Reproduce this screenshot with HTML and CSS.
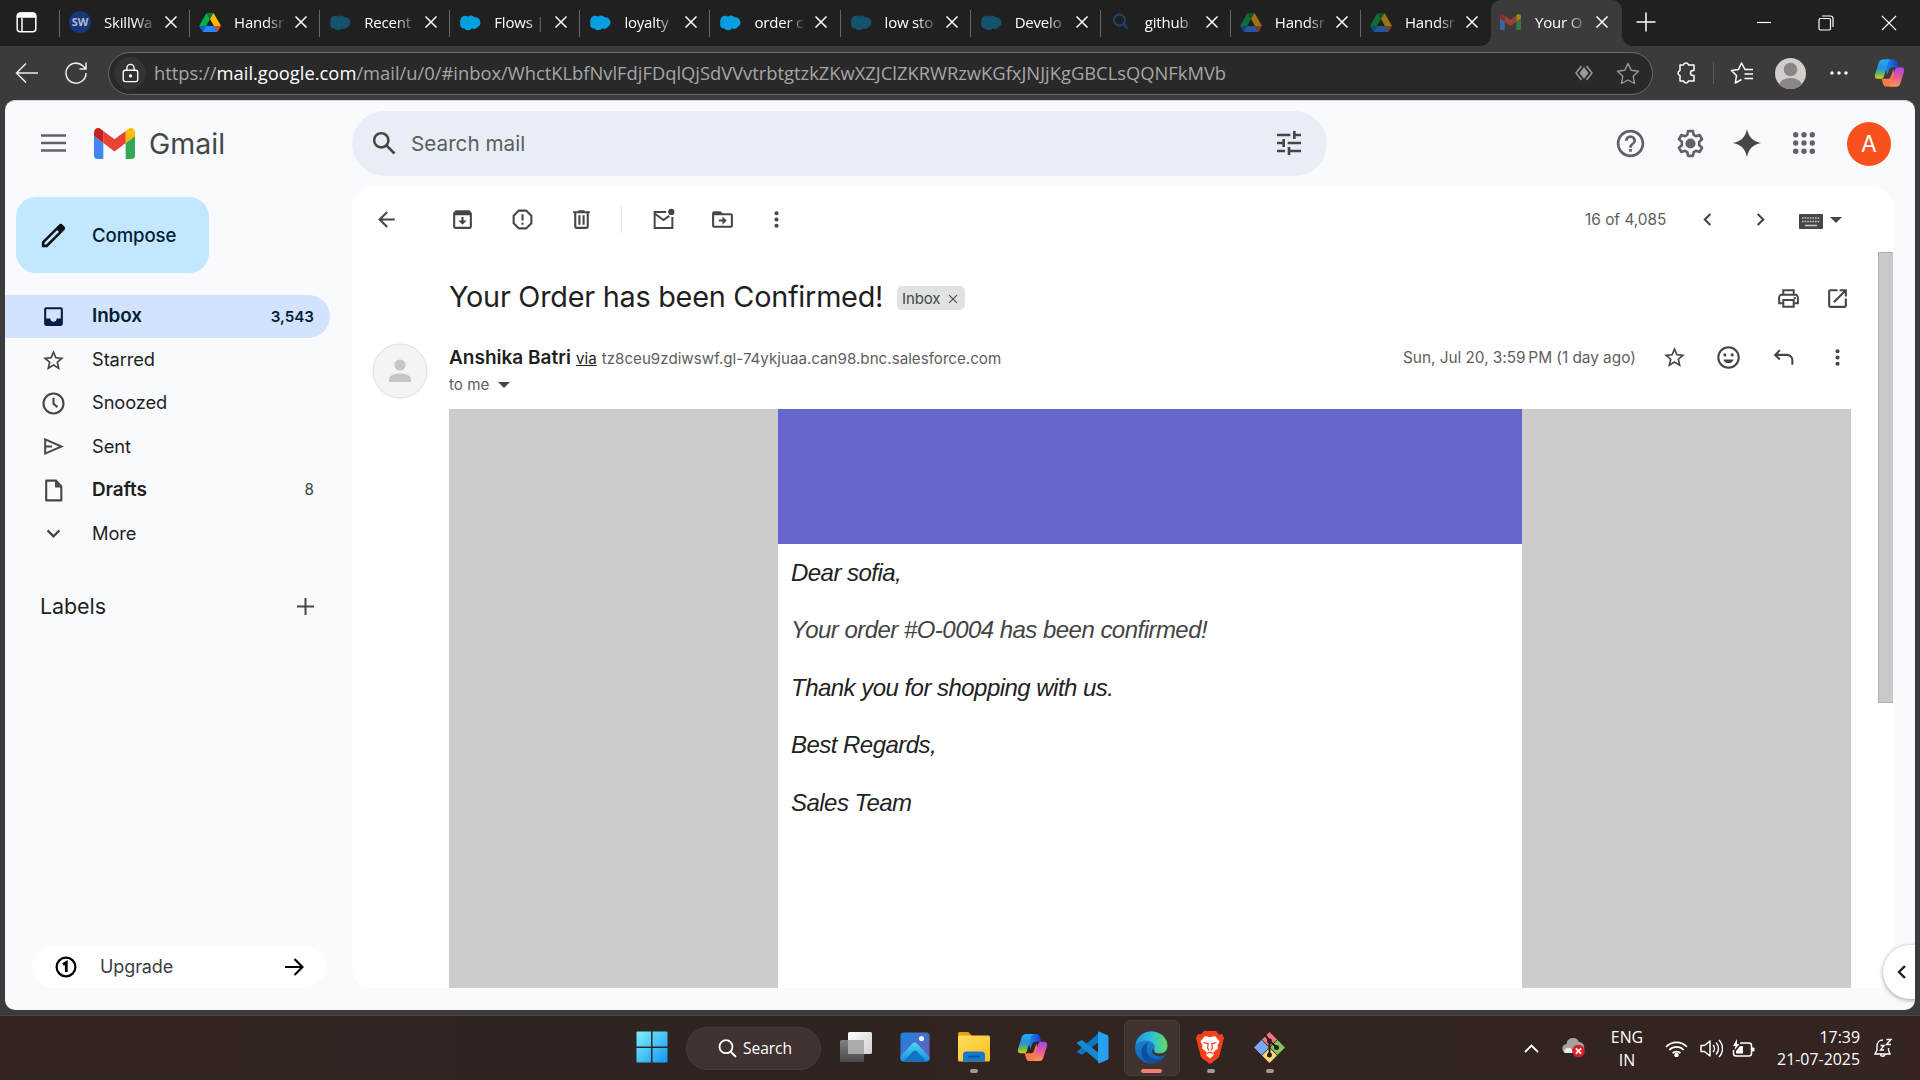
FILE: index.html
```html
<!DOCTYPE html>
<html lang="en">
<head>
<meta charset="utf-8">
<title>Your Order has been Confirmed! - Gmail</title>
<link rel="stylesheet" href="styles.css">
</head>
<body>
<svg class="defs" width="0" height="0">
  <defs>
    <linearGradient id="copA" x1="0" y1="0" x2="0" y2="1"><stop offset="0" stop-color="#1fb0f5"/><stop offset=".45" stop-color="#2a8fe0"/><stop offset=".75" stop-color="#5fb95a"/><stop offset="1" stop-color="#f2c811"/></linearGradient>
    <linearGradient id="copB" x1="0" y1="0" x2="0" y2="1"><stop offset="0" stop-color="#a348f0"/><stop offset=".5" stop-color="#e8559d"/><stop offset="1" stop-color="#ff9a4d"/></linearGradient>
    <linearGradient id="copC" x1="0" y1="0" x2="1" y2="0"><stop offset="0" stop-color="#1c9cf0"/><stop offset="1" stop-color="#1b3fd0"/></linearGradient>
    <linearGradient id="winG" x1="0" y1="0" x2="1" y2="1"><stop offset="0" stop-color="#7ff0fb"/><stop offset="1" stop-color="#0f98f6"/></linearGradient>
    <linearGradient id="edgeA" x1="0" y1="0" x2="1" y2="0"><stop offset="0" stop-color="#2296dd"/><stop offset=".5" stop-color="#2cc0d8"/><stop offset="1" stop-color="#62dc5c"/></linearGradient>
    <linearGradient id="edgeB" x1="0" y1="0" x2="0" y2="1"><stop offset="0" stop-color="#1c8fd8"/><stop offset="1" stop-color="#0d62b4"/></linearGradient>
    <linearGradient id="tvA" x1="0" y1="0" x2="1" y2="1"><stop offset="0" stop-color="#fff"/><stop offset="1" stop-color="#cfcfcf"/></linearGradient>
    <linearGradient id="tvB" x1="0" y1="0" x2="0" y2="1"><stop offset="0" stop-color="#8a8a8a"/><stop offset="1" stop-color="#4c4c4c"/></linearGradient>
    <linearGradient id="phA" x1="0" y1="0" x2="1" y2="1"><stop offset="0" stop-color="#1a86dd"/><stop offset="1" stop-color="#7355b8"/></linearGradient>
    <linearGradient id="phB" x1="0" y1="0" x2="0" y2="1"><stop offset="0" stop-color="#4fd6f5"/><stop offset="1" stop-color="#168fe0"/></linearGradient>
    <linearGradient id="foA" x1="0" y1="0" x2="1" y2="1"><stop offset="0" stop-color="#ffdb63"/><stop offset="1" stop-color="#fbc01f"/></linearGradient>

    <symbol id="close" viewBox="0 0 14 14"><path d="M1.500 1.500l11 11M12.500 1.500l-11 11" stroke="currentColor" stroke-width="1.500" fill="none"/></symbol>
    <symbol id="cloud" viewBox="0 0 22 16"><path d="M9 2.200a4.500 4.500 0 0 1 6.500.6 5.300 5.300 0 0 1 3 10 4.300 4.300 0 0 1-5.500 1 4.600 4.600 0 0 1-7.500.2A4 4 0 0 1 1.400 8.500 4 4 0 0 1 1.600 5 4.600 4.600 0 0 1 9 2.200z" fill="currentColor"/></symbol>
    <symbol id="drive" viewBox="0 0 87 78"><path fill="#0066da" d="m6.600 66.850 3.850 6.650c.8 1.400 1.950 2.500 3.300 3.300l13.750-23.800h-27.500c0 1.550.4 3.100 1.200 4.500z"/><path fill="#00ac47" d="m43.650 25-13.750-23.800c-1.350.8-2.500 1.900-3.300 3.300l-25.400 44a9.060 9.060 0 0 0-1.200 4.500h27.500z"/><path fill="#ea4335" d="m73.550 76.800c1.350-.8 2.500-1.900 3.300-3.300l1.600-2.750 7.650-13.250c.8-1.400 1.200-2.950 1.200-4.500h-27.500l5.850 11.500z"/><path fill="#00832d" d="m43.650 25 13.750-23.800c-1.350-.8-2.900-1.200-4.500-1.200h-18.500c-1.600 0-3.150.45-4.500 1.200z"/><path fill="#2684fc" d="m59.800 53h-32.300l-13.750 23.800c1.350.8 2.900 1.200 4.500 1.200h50.800c1.600 0 3.150-.45 4.500-1.200z"/><path fill="#ffba00" d="m73.400 26.500-12.700-22c-.8-1.400-1.950-2.500-3.300-3.300l-13.750 23.800 16.150 28h27.450c0-1.550-.4-3.100-1.200-4.500z"/></symbol>
    <symbol id="gmail" viewBox="52 42 88 66"><path fill="#4285f4" d="M58 108h14V74L52 59v43c0 3.320 2.690 6 6 6"/><path fill="#34a853" d="M120 108h14c3.320 0 6-2.690 6-6V59l-20 15"/><path fill="#fbbc04" d="M120 48v26l20-15v-8c0-7.420-8.470-11.650-14.400-7.200"/><path fill="#ea4335" d="M72 74V48l24 18 24-18v26L96 92"/><path fill="#c5221f" d="M52 51v8l20 15V48l-5.600-4.200c-5.940-4.450-14.400-.22-14.400 7.200"/></symbol>
    <symbol id="copilot" viewBox="0 0 32 32"><path d="M9 2h11c2 0 3 1 3.600 3l1.400 5h-6c-2 0-3 .8-3.600 3L14 18z" fill="url(#copC)"/><path d="M23 30H13c-2 0-3-1-3.600-3L8 22h6c2 0 3-1 3.600-3L20 12z" fill="#ff7a4a"/><path d="M9.500 2H18c-2 0-3 1-3.600 3l-4 14c-.6 2-1.700 3-3.700 3H4c-2.500 0-3.700-1.800-3-4.200L5 5c.7-2 2.300-3 4.500-3z" fill="url(#copA)"/><path d="M22.500 30H14c2 0 3-1 3.600-3l4-14c.6-2 1.700-3 3.700-3H28c2.500 0 3.700 1.800 3 4.200L27 27c-.7 2-2.300 3-4.500 3z" fill="url(#copB)"/></symbol>
    <symbol id="star" viewBox="0 0 24 24"><path fill="currentColor" d="M22 9.240l-7.190-.62L12 2 9.190 8.630 2 9.240l5.460 4.730L5.820 21 12 17.270 18.180 21l-1.630-7.030L22 9.240zM12 15.400l-3.760 2.270 1-4.280-3.320-2.880 4.380-.38L12 6.100l1.710 4.040 4.380.38-3.320 2.880 1 4.280L12 15.400z"/></symbol>
    <symbol id="more" viewBox="0 0 24 24"><path fill="currentColor" d="M12 8a2 2 0 1 0 0-4 2 2 0 0 0 0 4zm0 2a2 2 0 1 0 0 4 2 2 0 0 0 0-4zm0 6a2 2 0 1 0 0 4 2 2 0 0 0 0-4z"/></symbol>
    <symbol id="left" viewBox="0 0 24 24"><path fill="currentColor" d="M15.410 7.410L14 6l-6 6 6 6 1.410-1.410L10.830 12z"/></symbol>
    <symbol id="right" viewBox="0 0 24 24"><path fill="currentColor" d="M8.590 16.590L13.170 12 8.590 7.410 10 6l6 6-6 6z"/></symbol>
    <symbol id="caret" viewBox="0 0 12 6"><path fill="currentColor" d="M0 0h12L6 6z"/></symbol>
  </defs>
</svg>

<div class="browser">
  <div class="tabstrip">
    <div class="workspace"><svg width="21" height="21" viewBox="0 0 21 21" fill="none" stroke="#fff" stroke-width="1.500"><rect x="1.200" y="1.200" width="18.600" height="18.600" rx="3"/><path d="M1.500 5V4a3 3 0 0 1 3-3h12a3 3 0 0 1 3 3v1z" fill="#fff"/><path d="M6 6v13.500"/></svg></div>
    <div class="tab"><span class="fav sw">SW</span><span class="tab-title">SkillWa</span><svg class="x"><use href="#close"/></svg></div>
    <div class="tab"><svg class="fav drive"><use href="#drive"/></svg><span class="tab-title">Handsr</span><svg class="x"><use href="#close"/></svg></div>
    <div class="tab"><svg class="fav cloud dim"><use href="#cloud"/></svg><span class="tab-title">Recent</span><svg class="x"><use href="#close"/></svg></div>
    <div class="tab"><svg class="fav cloud"><use href="#cloud"/></svg><span class="tab-title">Flows |</span><svg class="x"><use href="#close"/></svg></div>
    <div class="tab"><svg class="fav cloud"><use href="#cloud"/></svg><span class="tab-title">loyalty</span><svg class="x"><use href="#close"/></svg></div>
    <div class="tab"><svg class="fav cloud"><use href="#cloud"/></svg><span class="tab-title">order c</span><svg class="x"><use href="#close"/></svg></div>
    <div class="tab"><svg class="fav cloud dim"><use href="#cloud"/></svg><span class="tab-title">low sto</span><svg class="x"><use href="#close"/></svg></div>
    <div class="tab"><svg class="fav cloud dim"><use href="#cloud"/></svg><span class="tab-title">Develo</span><svg class="x"><use href="#close"/></svg></div>
    <div class="tab"><svg class="fav lens" viewBox="0 0 22 22"><circle cx="9.500" cy="9" r="5.500"/><path d="M13.500 13l4.500 5"/></svg><span class="tab-title">github</span><svg class="x"><use href="#close"/></svg></div>
    <div class="tab"><svg class="fav drive faded"><use href="#drive"/></svg><span class="tab-title">Handsr</span><svg class="x"><use href="#close"/></svg></div>
    <div class="tab"><svg class="fav drive faded"><use href="#drive"/></svg><span class="tab-title">Handsr</span><svg class="x"><use href="#close"/></svg></div>
    <div class="tab active"><svg class="fav faded mailfav"><use href="#gmail"/></svg><span class="tab-title">Your O</span><svg class="x"><use href="#close"/></svg></div>
    <svg class="newtab" width="20" height="20" viewBox="0 0 20 20"><path d="M10 .5v19M.5 10h19" stroke="#fff" stroke-width="1.500"/></svg>
    <div class="winctl">
      <svg width="14" height="14" viewBox="0 0 14 14"><path d="M0 6.500h14" stroke="#fff" stroke-width="1.200"/></svg>
      <svg width="16" height="16" viewBox="0 0 16 16" fill="none" stroke="#fff" stroke-width="1.200"><rect x="1" y="3.500" width="11.500" height="11.500" rx="1.500"/><path d="M4 1h8.500a2.500 2.500 0 0 1 2.500 2.500V12"/></svg>
      <svg width="16" height="16" viewBox="0 0 16 16"><path d="M1 1l14 14M15 1L1 15" stroke="#fff" stroke-width="1.200"/></svg>
    </div>
  </div>

  <div class="navbar">
    <svg class="nav-back" width="24" height="22" viewBox="0 0 24 22" fill="none" stroke="#eee" stroke-width="1.500"><path d="M11 1.500L1.500 11l9.500 9.500M1.500 11h21.500"/></svg>
    <svg class="nav-reload" width="24" height="24" viewBox="0 0 24 24" fill="none" stroke="#eee" stroke-width="1.500"><path d="M22 12A10 10 0 1 1 19 5l3 3M22 1.500V8h-6.500"/></svg>
    <div class="address">
      <span class="lock"><svg width="19" height="20" viewBox="0 0 20 22" fill="none" stroke="#fff" stroke-width="1.500"><rect x="2" y="8" width="16" height="12.500" rx="2.500"/><path d="M6 8V5.500a4 4 0 0 1 8 0V8"/><circle cx="10" cy="14.200" r="1" fill="#fff"/></svg></span>
      <span class="url">https://<b>mail.google.com</b>/mail/u/0/#inbox/WhctKLbfNvlFdjFDqlQjSdVVvtrbtgtzkZKwXZJClZKRWRzwKGfxJNJjKgGBCLsQQNFkMVb</span>
      <svg class="addr-ai" width="18" height="16" viewBox="0 0 18 16"><path d="M6.500 1L1 8l5.500 7M11.500 1L17 8l-5.500 7" fill="none" stroke="#9a9a9a" stroke-width="1.500"/><path d="M9 2l4.500 6L9 14 4.500 8z" fill="#9a9a9a"/></svg>
      <svg class="addr-star" width="24" height="23" viewBox="0 0 24 23"><path d="M12 1.500l3.200 6.700 7.300 1-5.300 5.100 1.300 7.200-6.500-3.500-6.500 3.500 1.300-7.200L1.500 9.200l7.300-1z" fill="none" stroke="#9a9a9a" stroke-width="1.400" stroke-linejoin="round"/></svg>
    </div>
    <div class="nav-right">
      <svg class="n1" width="22" height="24" viewBox="0 0 22 24"><path d="M5 4h3.500a2.600 2.600 0 0 1 5 0H19v5.500h-1a2.500 2.500 0 0 0 0 5h1V20h-5.500a2.600 2.600 0 0 1-5 0H5v-5.500a2.600 2.600 0 0 1 0-5z" fill="none" stroke="#fff" stroke-width="1.500" stroke-linejoin="round"/></svg>
      <span class="nav-sep"></span>
      <svg class="n2" width="24" height="24" viewBox="0 0 24 24"><path d="M15 8.500L11.500 2 8.500 8.500l-7 1 5 5L5.300 22l6.200-3.500M14.500 8.500H23M14.500 13H23M14.500 17.500H23" fill="none" stroke="#fff" stroke-width="1.500" stroke-linejoin="round"/></svg>
      <svg class="n3" width="31" height="31" viewBox="0 0 31 31"><clipPath id="pc"><circle cx="15.500" cy="15.500" r="15.500"/></clipPath><g clip-path="url(#pc)"><path fill="#d0cecb" d="M0 0h31v31H0z"/><circle cx="15.500" cy="11.500" r="6.800" fill="#8b8683"/><ellipse cx="15.500" cy="28" rx="11.500" ry="8" fill="#8b8683"/></g></svg>
      <svg class="n4" width="18" height="4" viewBox="0 0 18 4" fill="#fff"><circle cx="2" cy="2" r="1.700"/><circle cx="9" cy="2" r="1.700"/><circle cx="16" cy="2" r="1.700"/></svg>
      <svg class="n5" width="31" height="32"><use href="#copilot"/></svg>
    </div>
  </div>

  <div class="page">
    <header class="top">
      <svg class="burger" width="25" height="18" viewBox="0 0 25 18"><path d="M0 1.500h25M0 9h25M0 16.500h25" stroke="#5f6368" stroke-width="2.400"/></svg>
      <svg class="logo" width="41" height="31"><use href="#gmail"/></svg>
      <span class="brand">Gmail</span>
      <div class="search">
        <svg class="search-ic" width="31" height="31" viewBox="0 0 24 24"><path fill="#444746" d="M20.490 19l-5.730-5.730C15.530 12.200 16 10.910 16 9.500A6.500 6.500 0 1 0 9.500 16c1.410 0 2.700-.47 3.770-1.240L19 20.490 20.490 19zM5 9.500C5 7.010 7.010 5 9.500 5S14 7.010 14 9.500 11.990 14 9.500 14 5 11.990 5 9.500z"/></svg>
        <span class="search-text">Search mail</span>
        <svg class="tune" width="32" height="32" viewBox="0 0 24 24"><path fill="#444746" d="M3 17v2h6v-2H3zM3 5v2h10V5H3zm10 16v-2h8v-2h-8v-2h-2v6h2zM7 9v2H3v2h4v2h2V9H7zm14 4v-2H11v2h10zm-6-4h2V7h4V5h-4V3h-2v6z"/></svg>
      </div>
      <div class="apps">
        <svg width="33" height="33" viewBox="0 0 24 24"><path fill="#5f6368" d="M11 18h2v-2h-2v2zm1-16C6.480 2 2 6.480 2 12s4.480 10 10 10 10-4.480 10-10S17.520 2 12 2zm0 18c-4.410 0-8-3.590-8-8s3.590-8 8-8 8 3.590 8 8-3.590 8-8 8zm0-14a4 4 0 0 0-4 4h2c0-1.100.9-2 2-2s2 .9 2 2c0 2-3 1.750-3 5h2c0-2.250 3-2.500 3-5a4 4 0 0 0-4-4z"/></svg>
        <svg class="a2" width="33" height="33" viewBox="0 0 24 24"><path fill="none" stroke="#5f6368" stroke-width="1.900" stroke-linejoin="round" d="M10.200 3h3.600l.5 2.700 1.700 1 2.600-.9 1.800 3.100-2.100 1.800v2.600l2.100 1.800-1.800 3.100-2.600-.9-1.700 1-.5 2.700h-3.600l-.5-2.700-1.700-1-2.600.9-1.800-3.100 2.100-1.800v-2.600L3.600 8.900l1.800-3.100 2.600.9 1.700-1z"/><circle cx="12" cy="12" r="3.700" fill="#5f6368"/></svg>
        <svg class="a3" width="28" height="28" viewBox="0 0 28 28"><path fill="#444746" d="M14 0c1.500 8 6 12.500 14 14-8 1.500-12.500 6-14 14-1.500-8-6-12.500-14-14C8 12.500 12.500 8 14 0z"/></svg>
        <svg class="a4" width="22" height="22" viewBox="0 0 22 22" fill="#5f6368"><circle cx="2.700" cy="2.700" r="2.700"/><circle cx="11" cy="2.700" r="2.700"/><circle cx="19.300" cy="2.700" r="2.700"/><circle cx="2.700" cy="11" r="2.700"/><circle cx="11" cy="11" r="2.700"/><circle cx="19.300" cy="11" r="2.700"/><circle cx="2.700" cy="19.300" r="2.700"/><circle cx="11" cy="19.300" r="2.700"/><circle cx="19.300" cy="19.300" r="2.700"/></svg>
        <span class="avatar">A</span>
      </div>
    </header>

    <div class="body">
      <nav class="side">
        <div class="compose"><svg width="31" height="31" viewBox="0 0 24 24"><path fill="#0b0f14" d="M20.410 4.940l-1.350-1.350a2 2 0 0 0-2.830 0L3 16.820V21h4.180L20.410 7.770a2 2 0 0 0 0-2.830zm-14 14.120L5 19v-1.360l9.820-9.820 1.410 1.410-9.820 9.830z"/></svg><span>Compose</span></div>
        <div class="item on"><svg viewBox="0 0 24 24"><path fill="#041e49" d="M19 3H5a2 2 0 0 0-2 2v14a2 2 0 0 0 2 2h14a2 2 0 0 0 2-2V5a2 2 0 0 0-2-2zm0 11h-4a3 3 0 0 1-6 0H5V5h14v9z"/></svg><span>Inbox</span><em>3,543</em></div>
        <div class="item"><svg><use href="#star"/></svg><span>Starred</span></div>
        <div class="item"><svg viewBox="0 0 24 24" fill="none" stroke="currentColor" stroke-width="2"><circle cx="12" cy="12" r="9.600"/><path d="M12 6.500v5.800l3.800 3.200"/></svg><span>Snoozed</span></div>
        <div class="item"><svg viewBox="0 0 24 24"><path fill="none" stroke="currentColor" stroke-width="1.900" d="M4 5.200L19.700 12 4 18.800zM4 12h6.500"/></svg><span>Sent</span></div>
        <div class="item bold"><svg viewBox="0 0 24 24"><path fill="none" stroke="currentColor" stroke-width="2" stroke-linejoin="round" d="M5 2.500h9.500L19.500 8v13.500H5z"/><path fill="currentColor" d="M13.500 2.500v6.500h6z"/></svg><span>Drafts</span><em>8</em></div>
        <div class="item"><svg viewBox="0 0 24 24"><path fill="none" stroke="currentColor" stroke-width="2.200" d="M6.300 9l5.700 5.700L17.700 9"/></svg><span>More</span></div>
        <div class="labels"><span>Labels</span><svg width="17" height="17" viewBox="0 0 17 17"><path d="M8.500 0v17M0 8.500h17" stroke="#444746" stroke-width="2"/></svg></div>
        <div class="upgrade">
          <svg width="22" height="22" viewBox="0 0 22 22"><circle cx="11" cy="11" r="9.400" fill="none" stroke="#000" stroke-width="2.200"/><path d="M8 8.500l3.300-2V16" fill="none" stroke="#000" stroke-width="2.800"/></svg>
          <span>Upgrade</span>
          <svg class="arr" width="19" height="18" viewBox="0 0 19 18"><path d="M0 9h17M9.500 1l8 8-8 8" fill="none" stroke="#000" stroke-width="2.200"/></svg>
        </div>
      </nav>

      <main class="mail">
        <div class="tools">
          <svg class="t1" viewBox="0 0 24 24"><path fill="currentColor" d="M20 11H7.830l5.590-5.590L12 4l-8 8 8 8 1.410-1.410L7.830 13H20z"/></svg>
          <svg class="t2" viewBox="0 0 24 24"><path fill="currentColor" d="M20.540 5.230l-1.390-1.680A1.450 1.450 0 0 0 18 3H6c-.47 0-.88.21-1.160.55L3.460 5.230A2 2 0 0 0 3 6.500V19a2 2 0 0 0 2 2h14a2 2 0 0 0 2-2V6.500c0-.48-.17-.93-.46-1.270zM5 19V8h14v11zM11 9.500V13H8l4 4 4-4h-3V9.500z"/></svg>
          <svg class="t3" viewBox="0 0 24 24"><path fill="none" stroke="currentColor" stroke-width="2" d="M8.300 3.500h7.400l4.800 4.800v7.400l-4.800 4.800H8.300l-4.800-4.800V8.300z" stroke-linejoin="round"/><path fill="currentColor" d="M11 7h2v6h-2zM11 15h2v2h-2z"/></svg>
          <svg class="t4" viewBox="0 0 24 24"><path fill="currentColor" d="M15 4V3H9v1H4v2h1v13a2 2 0 0 0 2 2h10a2 2 0 0 0 2-2V6h1V4h-5zm2 15H7V6h10v13zM9 8h2v9H9zm4 0h2v9h-2z"/></svg>
          <span class="tsep"></span>
          <svg class="t5" viewBox="0 0 24 24"><path fill="none" stroke="currentColor" stroke-width="1.900" d="M14.500 4.800H3.500v15.400h17V9.500M3.800 6.500l8.200 6 5.500-4"/><circle cx="19.500" cy="4.700" r="3" fill="currentColor"/></svg>
          <svg class="t6" viewBox="0 0 24 24"><path fill="currentColor" d="M20 6h-8l-2-2H4a2 2 0 0 0-2 2v12a2 2 0 0 0 2 2h16a2 2 0 0 0 2-2V8a2 2 0 0 0-2-2zm0 12H4V8h16v10zm-8-1l4-4-4-4v3H8.500v2H12z"/></svg>
          <svg class="t7"><use href="#more"/></svg>
          <span class="count">16 of 4,085</span>
          <svg class="t8"><use href="#left"/></svg>
          <svg class="t9"><use href="#right"/></svg>
          <svg class="kbd" viewBox="0 0 24 15"><rect width="24" height="15" rx="1" fill="#444746"/><path d="M3 4h18M3 7.500h18" stroke="#c8c8c8" stroke-width="1.500" stroke-dasharray="1.600 1"/><path d="M6 11.500h12" stroke="#c8c8c8" stroke-width="1.400"/></svg>
          <svg class="tcaret"><use href="#caret"/></svg>
        </div>

        <div class="scroll">
          <div class="subject">
            <h1>Your Order has been Confirmed!</h1>
            <span class="chip">Inbox <svg width="10" height="10"><use href="#close"/></svg></span>
            <svg class="print" viewBox="0 0 24 24" fill="none" stroke="#444746" stroke-width="1.900"><path d="M7 8.500V4h10v4.500M6.500 16.500H3V11a2.500 2.500 0 0 1 2.500-2.500h13A2.500 2.500 0 0 1 21 11v5.500h-3.500"/><path d="M7 13.500h10V20H7z"/><path d="M17 11.500h2"/></svg>
            <svg class="open" viewBox="0 0 24 24"><path fill="#444746" d="M19 19H5V5h7V3H5a2 2 0 0 0-2 2v14a2 2 0 0 0 2 2h14a2 2 0 0 0 2-2v-7h-2v7zM14 3v2h3.590l-9.830 9.830 1.410 1.410L19 6.410V10h2V3h-7z"/></svg>
          </div>
          <div class="sender">
            <span class="face"><svg width="56" height="56" viewBox="0 0 56 56"><circle cx="28" cy="28" r="27" fill="#f4f4f4" stroke="#e0e0e0"/><circle cx="28" cy="22" r="5.500" fill="#c6c6c6"/><path d="M17 39v-3c0-4 7-5.500 11-5.500S39 32 39 36v3z" fill="#c6c6c6"/></svg></span>
            <div class="who">
              <div class="line1"><b>Anshika Batri</b><u>via</u><span class="domain">tz8ceu9zdiwswf.gl-74ykjuaa.can98.bnc.salesforce.com</span></div>
              <div class="line2"><span>to me</span><svg><use href="#caret"/></svg></div>
            </div>
            <div class="meta">
              <span class="date">Sun, Jul 20, 3:59&#8239;PM (1 day ago)</span>
              <svg class="m1"><use href="#star"/></svg>
              <svg class="m2" viewBox="0 0 24 24"><circle cx="12" cy="12" r="9.800" fill="none" stroke="currentColor" stroke-width="2"/><circle cx="8.500" cy="9.500" r="1.500" fill="currentColor"/><circle cx="15.500" cy="9.500" r="1.500" fill="currentColor"/><path d="M7 14h10a5.300 5.300 0 0 1-10 0z" fill="currentColor"/></svg>
              <svg class="m3" viewBox="0 0 24 24"><path fill="none" stroke="currentColor" stroke-width="2" d="M8.500 5L4 9.500 8.500 14M4 9.500h11.500a5 5 0 0 1 5 5V19"/></svg>
              <svg class="m4"><use href="#more"/></svg>
            </div>
          </div>
          <div class="message">
            <div class="sheet">
              <div class="banner"></div>
              <div class="letter">
                <p>Dear sofia,</p>
                <p class="soft">Your order #O-0004 has been confirmed!</p>
                <p>Thank you for shopping with us.</p>
                <p>Best Regards,</p>
                <p>Sales Team</p>
              </div>
            </div>
          </div>
        </div>
        <div class="bar"></div>
      </main>
    </div>
    <div class="panel-toggle"><svg width="11" height="14" viewBox="0 0 11 14"><path d="M9 1L3 7l6 6" fill="none" stroke="#1f1f1f" stroke-width="2.400"/></svg></div>
  </div>
</div>

<footer class="taskbar">
  <div class="cell"><svg width="32" height="32" viewBox="0 0 32 32"><path fill="url(#winG)" d="M1.500.5H15v15H.5v-14a1 1 0 0 1 1-1zM16.500.5h14a1 1 0 0 1 1 1v14h-15zM.5 17H15v14.500H1.500a1 1 0 0 1-1-1zM16.500 17h15v13.500a1 1 0 0 1-1 1h-14z"/></svg></div>
  <div class="tsearch"><svg width="19" height="19" viewBox="0 0 19 19"><circle cx="8" cy="7.700" r="6.500" fill="none" stroke="#fff" stroke-width="1.800"/><path d="M12.500 12.500L18 18" stroke="#fff" stroke-width="2"/></svg><span>Search</span></div>
  <div class="cell"><svg width="32" height="30" viewBox="0 0 32 30"><rect x="8" width="24" height="22" rx="1.500" fill="url(#tvA)"/><rect y="8" width="24" height="22" rx="1.500" fill="url(#tvB)" opacity=".92"/><rect x="8" y="8" width="16" height="14" fill="#aaa"/></svg></div>
  <div class="cell"><svg width="30" height="30" viewBox="0 0 30 30"><rect x=".5" y=".5" width="29" height="29" rx="3.500" fill="url(#phA)"/><path d="M.5 24l12-12.500a3 3 0 0 1 4.500 0L29.500 25v1a3.500 3.500 0 0 1-3.500 3.500H4A3.500 3.500 0 0 1 .5 26z" fill="url(#phB)"/><path d="M4 29l9-9.500a2.500 2.500 0 0 1 4 0L26 29z" fill="#1173c6"/><circle cx="21.500" cy="6.500" r="2.600" fill="#e9f2ff"/></svg></div>
  <div class="cell run"><svg width="32" height="30" viewBox="0 0 32 30"><path d="M0 1.500A1.500 1.500 0 0 1 1.500 0h9L14 4v4H0z" fill="#dfa10c"/><rect y="3.500" width="32" height="26" rx="1.500" fill="url(#foA)"/><path d="M5 29.500V23a3.500 3.500 0 0 1 3.500-3.500h15A3.500 3.500 0 0 1 27 23v6.500z" fill="#1679cc"/><path d="M10 24.500h12" stroke="#0a4f91" stroke-width="1.800"/></svg></div>
  <div class="cell"><svg width="31" height="31"><use href="#copilot"/></svg></div>
  <div class="cell"><svg width="33" height="33" viewBox="0 0 33 33"><path d="M24 1v9L6 24l-4.500-2.500L1 20.500z" fill="#0d75bd"/><path d="M1 12.500l.5-1.500L6 9l18 14v9z" fill="#1789d1"/><path d="M23.500.7L31 4c1 .5 1.500 1.200 1.500 2.300v20.400c0 1.100-.5 1.800-1.500 2.300l-7.500 3.300c-1 .4-1.500 0-1.500-1V2c0-1 .500-1.700 1.500-1.300z" fill="#27a0ef"/></svg></div>
  <div class="cell here"><svg width="33" height="33" viewBox="0 0 33 33"><circle cx="16" cy="16.500" r="16" fill="url(#edgeB)"/><path d="M.8 14C2 5.500 8.500.500 16.500.5c9.500 0 16 6.800 16 14 0 5-3.500 8-8 8-4.500 0-6-1.800-5.200-3.500 1.800-4-1-9.500-8.300-9.500-5 0-8.600 2-10.200 4.500z" fill="url(#edgeA)"/><path d="M11.500 18c0 7 6.500 11.500 12 10 2.500-.6 4.500-1.600 6-2.500-2.500 4.500-8 7.500-13 7-6-.8-10-6-10-11.500 0-5 3-8.500 7-9.500-1.500 2-2 4-2 6.500z" fill="#114f98"/><path d="M19.300 19c-.8 1.700.7 3.500 5.200 3.500 2.800 0 5.300-1 6.800-3 .8 1 .2 3-1.600 4.600-2.400 1.600-6 1.900-9.200.4-2.800-1.300-4-3.500-3.300-6 1-.3 1.800 0 2.100.5z" fill="#40322f"/></svg></div>
  <div class="cell run"><svg width="28" height="33" viewBox="0 0 28 33"><path d="M8 0h12l3 3.500 3-.5 2 4-1 3.500-3.500 14c-.5 1.500-1 2.300-2.200 3.200L14 33l-7.300-5.300c-1.200-.9-1.700-1.700-2.200-3.200L1 10.500 0 7l2-4 3 .5z" fill="#f7401a"/><path d="M9 5l5 1.200L19 5l4.500 5.500-2 4 .5 3-4.500 3.500v3.500L14 27.500 10.500 24.500V21L6 17.500l.5-3-2-4z" fill="#fff"/><path d="M7.500 11.500l4.800 1.300-.8 4 1.500 2.700M20.500 11.500l-4.800 1.300.8 4-1.500 2.700M11 22.500l3-1.300 3 1.300" fill="none" stroke="#f7401a" stroke-width="1.200"/></svg></div>
  <div class="cell run"><svg width="33" height="33" viewBox="0 0 33 33"><path fill="#f2787c" d="M16.500 1L24 8.500l-7.500 7.500L9 8.500z"/><path fill="#7aa8f8" d="M8.500 9l7.500 7.500L8.500 24 1 16.500z"/><path fill="#86c65a" d="M24.500 9l7.500 7.500-7.500 7.500-7.500-7.500z"/><path fill="#f5d97a" d="M16.500 17l7.500 7.500-7.500 7.500L9 24.500z"/><path d="M12 4l4.500 5.500v14M16.500 10l7 6" stroke="#2a1d1b" stroke-width="2" fill="none"/><circle cx="16.500" cy="10" r="2.500" fill="#2a1d1b"/><circle cx="23.500" cy="16.500" r="2.500" fill="#2a1d1b"/><circle cx="16.500" cy="24" r="2.500" fill="#2a1d1b"/></svg></div>

  <div class="tray">
    <span class="c1"><svg width="15" height="9" viewBox="0 0 15 9"><path d="M1 8l6.500-6.500L14 8" fill="none" stroke="#fff" stroke-width="1.800"/></svg></span>
    <span class="c2"><svg width="24" height="22" viewBox="0 0 24 22"><path d="M5 16a4.500 4.500 0 0 1-.5-9A6.500 6.500 0 0 1 17 5a5.500 5.500 0 0 1 2 10.500z" fill="#a5a1a0"/><path d="M2 15c0-3 3-5 6-4l6 5H5c-2 0-3-.3-3-1z" fill="#ece9e8"/><circle cx="16.500" cy="14" r="6.300" fill="#d8202c"/><path d="M13.800 11.300l5.400 5.400M19.200 11.300l-5.400 5.400" stroke="#fff" stroke-width="1.700"/></svg></span>
    <span class="c3">ENG<br>IN</span>
    <span class="c4"><svg width="23" height="17" viewBox="0 0 23 17" fill="none" stroke="#fff" stroke-width="1.700"><path d="M1 6.800a14.500 14.500 0 0 1 21 0M4.300 10a10 10 0 0 1 14.400 0M7.500 13.200a5.700 5.700 0 0 1 8 0"/><circle cx="11.500" cy="15" r="1.400" fill="#fff"/></svg></span>
    <span class="c5"><svg width="23" height="19" viewBox="0 0 23 19" fill="none" stroke="#fff" stroke-width="1.500"><path d="M1 6.500h3.500L10 2v15l-5.500-4.500H1z" stroke-linejoin="round"/><path d="M13 6a5 5 0 0 1 0 7M16 3.500a8.500 8.500 0 0 1 0 12M19 1a12 12 0 0 1 0 17"/></svg></span>
    <span class="c6"><svg width="23" height="19" viewBox="0 0 23 19"><path d="M8 4h9a2.500 2.500 0 0 1 2.500 2.500v8A2.500 2.500 0 0 1 17 17H4a2.500 2.500 0 0 1-2.500-2.500V11" fill="none" stroke="#fff" stroke-width="1.500"/><path d="M20 8.500h1.500a1 1 0 0 1 1 1v2a1 1 0 0 1-1 1H20z" fill="#fff"/><path d="M8 7h3v7.500H4V12z" fill="#fff"/><path d="M5 0L1 7h2.500L2.500 11 7.500 5H5z" fill="#fff"/></svg></span>
    <span class="c7">17:39<br>21-07-2025</span>
    <span class="c8"><svg width="20" height="20" viewBox="0 0 20 20" fill="none" stroke="#fff" stroke-width="1.400"><path d="M10 2C6 2 4 5 4 8v4l-2 4h15l-1.500-4V10M7.500 16.500a2.300 2.300 0 0 0 4.500 0"/><path d="M7.500 7.500H11L7.500 12H11M13.500 1.500h4.500L13.500 6.500H18"/></svg></span>
  </div>
</footer>
</body>
</html>
```
FILE: styles.css
```css
* { box-sizing: border-box; }
html, body { margin: 0; width: 1920px; height: 1080px; overflow: hidden; }
body { background: #312421; font-family: Inter, "Liberation Sans", sans-serif; color: #1f1f1f; display: flex; flex-direction: column; }
.defs { position: absolute; }
svg { flex: none; display: block; }
span { white-space: nowrap; }

.browser { height: 1016px; background: #3b3b3b; border-bottom: 1px solid #4c4846; flex: none; }

/* tab strip */
.tabstrip { height: 46px; background: #202020; display: flex; align-items: center; padding-bottom: 2px; }
.workspace { width: 60px; padding-left: 16px; }
.tab { width: 130.100px; height: 46px; flex: none; display: flex; align-items: center; position: relative; padding-left: 9px; margin-bottom: -2px; padding-bottom: 2px; }
.tab::before { content: ""; position: absolute; left: -1px; top: 10px; width: 1px; height: 27px; background: #666; }
.fav { width: 22px; height: 17px; margin-right: 13px; flex: none; }
.fav.drive { height: 19px; }
.fav.lens { height: 22px; fill: none; stroke: #1c4670; stroke-width: 2; }
.cloud { color: #049fe0; }
.cloud.dim { color: #14526e; }
.faded { opacity: .55; }
.sw { height: 22px; border-radius: 50%; background: #17377c; color: #b4bccb; font: bold 11px/22px "Noto Sans", sans-serif; text-align: center; }
.tab-title { width: 53px; color: #fff; font: 15px/24px "Open Sans", "Noto Sans", sans-serif; letter-spacing: -.2px; -webkit-mask-image: linear-gradient(90deg, #000 60%, rgba(0, 0, 0, .1) 96%); mask-image: linear-gradient(90deg, #000 60%, rgba(0, 0, 0, .1) 96%); }
.x { width: 14px; height: 14px; margin-left: 7px; color: #fff; }
.tab.active { width: 131px; background: #3b3b3b; border-radius: 10px 10px 0 0; }
.tab.active::before { left: -10px; top: 36px; width: 10px; height: 10px; background: radial-gradient(circle at 0 0, #202020 9.500px, #3b3b3b 10px); }
.tab.active::after { content: ""; position: absolute; right: -10px; top: 36px; width: 10px; height: 10px; background: radial-gradient(circle at 100% 0, #202020 9.500px, #3b3b3b 10px); }
.mailfav { height: 16px; width: 21px; margin-right: 14px; }
.newtab { margin-left: 14px; }
.winctl { margin-left: auto; display: flex; align-items: center; gap: 47px; padding-right: 23px; padding-top: 2px; }

/* address row */
.navbar { height: 54px; display: flex; align-items: center; padding: 0 14px 0 15px; }
.nav-back { margin-right: 25px; }
.nav-reload { margin-right: 20px; }
.address { width: 1545px; height: 43px; border: 1.500px solid #6b6b6b; border-radius: 22px; background: #292929; display: flex; align-items: center; padding: 0 12px 0 5px; }
.lock { width: 32px; height: 32px; border-radius: 50%; background: #333; display: grid; place-items: center; margin-right: 8px; }
.url { font: 18.350px/28px "Open Sans", "Noto Sans", sans-serif; color: #a6a6a6; flex: 1; padding-bottom: 1px; }
.url b { font-weight: 400; color: #fff; }
.addr-ai { margin-right: 23px; }
.nav-right { display: flex; align-items: center; }
.n1 { margin-left: 22px; }
.nav-sep { width: 1px; height: 22px; background: #5a5a5a; margin: 0 17px 0 16px; }
.n2 { margin-left: -1px; }
.n3 { margin: 0 24px 0 21px; }
.n5 { margin-left: 26px; }

/* gmail page */
.page { margin: 0 5px; width: 1910px; height: 910px; background: #f8fafe; border-radius: 10px; border-top: 1px solid #d8d9dd; position: relative; overflow: hidden; }
.top { height: 86px; display: flex; align-items: center; padding: 0 24px 2px 36px; }
.burger { margin-right: 27px; }
.logo { margin-left: 1px; }
.brand { font-size: 28.500px; color: #444746; margin-left: 14px; }
.search { width: 975px; height: 65px; border-radius: 33px; background: #e9eef6; display: flex; align-items: center; padding: 0 22px 0 17px; margin-left: auto; }
.search-text { font-size: 20.700px; color: #5b5e62; margin-left: 11px; flex: 1; }
.apps { display: flex; align-items: center; width: 278px; margin-left: 286px; }
.apps svg:first-child { margin-left: 1px; }
.a2 { margin-left: 27px; }
.a3 { margin-left: 26px; }
.a4 { margin-left: 32px; }
.avatar { width: 44px; height: 44px; border-radius: 50%; background: #f8511d; color: #fff; font-size: 23px; line-height: 44px; text-align: center; margin-left: 32px; margin-top: 1px; }
.body { display: flex; }

.side { width: 347px; padding-top: 10px; color: #1f1f1f; font-size: 18.300px; letter-spacing: -.1px; }
.compose { width: 193px; height: 76px; border-radius: 20px; background: #c2e7ff; margin: 0 0 22px 11px; display: flex; align-items: center; padding-left: 22px; gap: 23px; font-weight: 500; color: #001d35; font-size: 18.600px; }
.item { width: 325px; height: 43.400px; padding: 0 16px 0 36px; display: flex; align-items: center; border-radius: 0 22px 22px 0; color: #444746; }
.item svg { width: 25px; height: 25px; margin-right: 26px; }
.item span { flex: 1; color: #1f1f1f; padding-bottom: 2px; }
.item em { font-style: normal; font-size: 15.200px; letter-spacing: 0; padding-bottom: 1px; }
.item.on { background: #d3e3fd; }
.item.on span, .item.on em { color: #001d35; font-weight: 600; }
.item.on span, .item.bold span { font-size: 18.900px; }
.item.bold span { font-weight: 600; }
.labels { width: 325px; padding: 0 16px 0 35px; height: 60px; margin-top: 21px; display: flex; align-items: center; justify-content: space-between; font-size: 21.500px; }
.upgrade { width: 293px; height: 43px; border-radius: 22px; background: #fff; margin: 309px 0 0 27px; padding: 0 21px 0 23px; display: flex; align-items: center; color: #3c4043; }
.upgrade span { flex: 1; margin-left: 23px; font-size: 18px; }

.mail { width: 1541px; height: 801px; background: #fff; border-radius: 20px; overflow: hidden; position: relative; color: #444746; }
.tools { height: 65px; display: flex; align-items: center; padding-left: 22px; }
.tools svg { width: 25px; height: 25px; }
.tools .t2 { margin-left: 51px; }
.tools .t3 { margin-left: 35px; }
.tools .t4 { margin-left: 34px; }
.tsep { width: 1px; height: 27px; background: #e3e5e8; margin: 0 29px 0 27px; }
.tools .t6 { margin-left: 34px; }
.tools .t7 { margin-left: 29px; }
.count { margin-left: auto; width: 83px; font-size: 15.400px; color: #5e5e5e; }
.tools .t8 { margin-left: 27px; }
.tools .t9 { margin-left: 28px; }
.tools .kbd { width: 24px; height: 15px; margin: 3px 0 0 26px; }
.tools .tcaret { width: 12px; height: 6px; margin: 0 51px 0 7px; }

.subject { height: 90px; display: flex; align-items: center; padding-left: 97px; }
.subject h1 { margin: 0; font-weight: 400; font-size: 28.800px; letter-spacing: -.24px; color: #1f1f1f; width: 434px; white-space: nowrap; padding-bottom: 2px; }
.chip { height: 24px; margin: 2px 0 0 14px; padding: 0 5px; background: #e0e3e1; border-radius: 5px; display: flex; align-items: center; gap: 8px; font-size: 15px; letter-spacing: -.1px; width: 68px; }
.chip svg { margin-top: 2px; }
.print, .open { width: 25px; height: 25px; margin-top: 2px; }
.print { margin-left: auto; }
.open { margin: 2px 43px 0 24px; }

.sender { height: 67px; display: flex; align-items: flex-start; }
.face { margin: 1px 21px 0 20px; }
.who { padding-top: 5px; font-size: 15.170px; color: #5e5e5e; }
.line1 { display: flex; align-items: baseline; line-height: 22px; }
.line1 b { font-size: 19px; font-weight: 600; color: #1f1f1f; width: 122px; white-space: nowrap; }
.line1 u { margin: 0 5px; color: #222; }
.line2 { display: flex; align-items: center; gap: 9px; line-height: 22px; padding-top: 4px; }
.line2 svg { width: 12px; height: 6px; color: #444746; }
.meta { margin-left: auto; display: flex; align-items: center; height: 30px; padding-right: 43px; }
.meta svg { width: 25px; height: 25px; }
.date { font-size: 15.400px; width: 231px; letter-spacing: -.03px; color: #5e5e5e; margin-right: 28px; }
.meta .m2 { margin-left: 29px; }
.meta .m3 { margin-left: 30px; }
.meta .m4 { margin-left: 29px; }

.message { width: 1402px; height: 579px; margin-left: 97px; background: #ccc; }
.sheet { width: 744px; height: 579px; margin-left: 329px; background: #fff; }
.banner { height: 135px; background: #6666cc; }
.letter { padding: 15px 13px; font: italic 24px/28px "Liberation Sans", Arial, sans-serif; letter-spacing: -.53px; color: #222; }
.letter p { margin: 0 0 29.400px; }
.letter .soft { color: #444; }
.bar { position: absolute; right: 0; top: 65px; width: 15px; height: 451px; background: #c9c9c9; border: 1px solid #b0b0b0; border-right: 0; }
.panel-toggle { position: absolute; left: 1878px; top: 844px; width: 60px; height: 54px; border-radius: 27px; background: #fff; box-shadow: 0 1px 4px rgba(0, 0, 0, .4); display: flex; align-items: center; padding-left: 13px; }

/* windows taskbar */
.taskbar { height: 64px; display: flex; align-items: center; padding-left: 622px; background: linear-gradient(90deg, #352421, #2f2422 30%, #312421 60%, #352421); color: #fff; font-family: "Open Sans", "Noto Sans", sans-serif; }
.cell { width: 59.100px; height: 64px; display: grid; place-items: center; position: relative; flex: none; padding-bottom: 2px; }
.tsearch { width: 135px; height: 43px; margin: 0 5px; border-radius: 22px; background: #3f3230; border: 1px solid #493b38; display: flex; align-items: center; padding-left: 31px; gap: 6px; font-size: 15.600px; font-weight: 500; letter-spacing: -.1px; }
.run::after, .here::after { content: ""; position: absolute; bottom: 7px; left: 26px; width: 8px; height: 4px; border-radius: 2px; background: #a09896; }
.here::before { content: ""; position: absolute; left: 2px; top: 4px; width: 54px; height: 54px; border-radius: 6px; background: #40322f; border: 1px solid #4a3c39; }
.here svg { position: relative; }
.here::after { left: 19px; width: 21px; background: #f4806c; z-index: 1; }
.tray { margin-left: auto; display: flex; align-items: center; height: 64px; width: 409px; line-height: 22.500px; font-size: 15.900px; }
.tray span { display: flex; justify-content: center; align-items: center; flex: none; }
.tray .c1 { width: 41px; }
.tray .c2 { width: 44px; }
.tray .c3 { width: 62px; display: block; text-align: center; padding-top: 1px; }
.tray .c4 { width: 37px; }
.tray .c5 { width: 32px; }
.tray .c6 { width: 33px; }
.tray .c7 { width: 100px; display: block; text-align: right; }
.tray .c8 { width: 46px; }
```
